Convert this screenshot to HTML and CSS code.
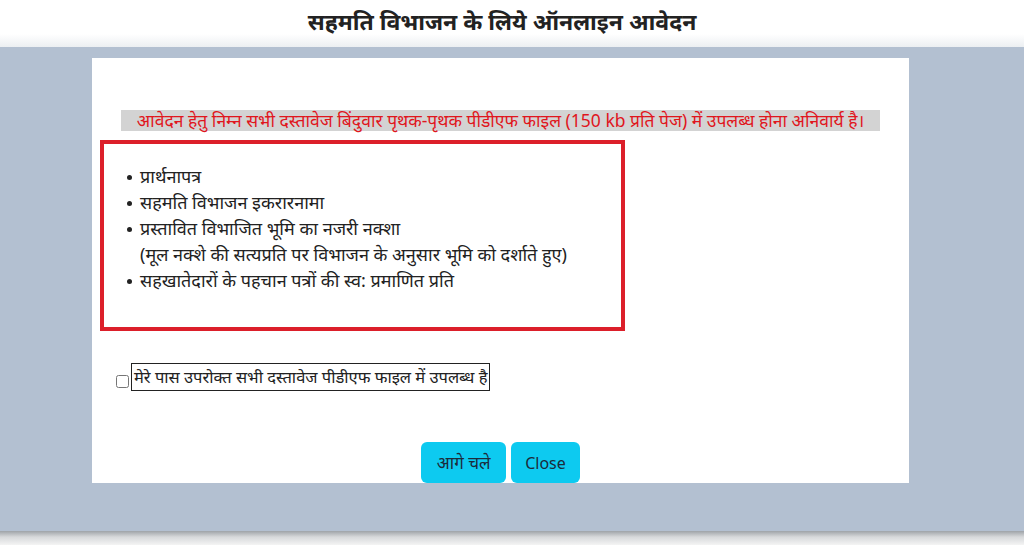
FILE: index.html
```html
<!DOCTYPE html>
<html lang="hi">
<head>
<meta charset="utf-8">
<title>सहमति विभाजन के लिये ऑनलाइन आवेदन</title>
<link rel="stylesheet" href="styles.css">
</head>
<body>
<header class="topbar">
  <h1 class="title">सहमति विभाजन के लिये ऑनलाइन आवेदन</h1>
</header>
<main class="backdrop">
  <section class="card">
    <p class="notice">आवेदन हेतु निम्न सभी दस्तावेज बिंदुवार पृथक-पृथक पीडीएफ फाइल (150 kb प्रति पेज) में उपलब्ध होना अनिवार्य है।</p>
    <div class="docbox">
      <ul class="doclist">
        <li>प्रार्थनापत्र</li>
        <li>सहमति विभाजन इकरारनामा</li>
        <li>प्रस्तावित विभाजित भूमि का नजरी नक्शा<br>(मूल नक्शे की सत्यप्रति पर विभाजन के अनुसार भूमि को दर्शाते हुए)</li>
        <li>सहखातेदारों के पहचान पत्रों की स्व: प्रमाणित प्रति</li>
      </ul>
    </div>
    <div class="confirm">
      <input type="checkbox" id="agree" class="check">
      <label for="agree" class="confirm-label">मेरे पास उपरोक्त सभी दस्तावेज पीडीएफ फाइल में उपलब्ध है</label>
    </div>
    <div class="actions">
      <button class="btn btn-hi" type="button">आगे चले</button>
      <button class="btn" type="button">Close</button>
    </div>
  </section>
</main>
<footer class="bottom"></footer>
</body>
</html>
```
FILE: styles.css
```css
* { box-sizing: border-box; }
html, body { margin: 0; padding: 0; }
body {
  width: 1024px;
  height: 545px;
  overflow: hidden;
  background: #fff;
  font-family: "Noto Sans", "Noto Sans Devanagari", "Lohit Devanagari", "Liberation Sans", sans-serif;
  color: #222;
}
.topbar {
  height: 47px;
  display: flex;
  justify-content: center;
  align-items: center;
  background: linear-gradient(#ffffff 0, #ffffff 34px, #eceff2 47px);
}
.title {
  margin: 0 20px 0 0;
  font-size: 23px;
  font-weight: 700;
  color: #222;
  line-height: 1;
  padding-bottom: 4px;
}
.backdrop {
  background: #b3c0d1;
  height: 484px;
  padding: 11px 115px 0 92px;
}
.card {
  background: #fff;
  width: 817px;
  height: 425px;
  padding: 52px 29px 0 8px;
  display: flex;
  flex-direction: column;
}
.notice {
  margin: 0 0 9px 21px;
  height: 21px;
  background: #d3d3d3;
  color: #e0161d;
  font-size: 17.5px;
  line-height: 21px;
  text-align: center;
  white-space: nowrap;
}
.docbox {
  width: 525px;
  height: 193px;
  border: 4px solid #dc1f2a;
  padding: 19px 0 0 0;
}
.doclist {
  margin: 0;
  padding-left: 36px;
  list-style: none;
  font-size: 18px;
  line-height: 26px;
  color: #222;
}
.doclist li {
  position: relative;
}
.doclist li::before {
  content: "";
  position: absolute;
  left: -13px;
  top: 12px;
  width: 5px;
  height: 5px;
  border-radius: 50%;
  background: #222;
}
.confirm {
  display: flex;
  align-items: center;
  margin: 32px 0 0 16px;
}
.check {
  margin: 8px 2px 0 0;
  width: 13px;
  height: 13px;
}
.confirm-label {
  border: 1px solid #222;
  height: 28px;
  padding: 0 2px;
  font-size: 16.5px;
  line-height: 26px;
  color: #222;
  white-space: nowrap;
}
.actions {
  display: flex;
  justify-content: center;
  gap: 5px;
  margin: 51px -21px 0 0;
}
.btn {
  background: #0dcaf0;
  border: none;
  border-radius: 6px;
  height: 41px;
  padding: 0 14px;
  font-family: "Noto Sans", "Noto Sans Devanagari", "Lohit Devanagari", "Liberation Sans", sans-serif;
  font-size: 16px;
  color: #1c2b3a;
}
.btn-hi {
  font-size: 17px;
  width: 85px;
  padding: 0;
}
.bottom {
  height: 14px;
  background: linear-gradient(#9ea3a8 0, #d7d9db 6px, #f4f4f4 14px);
}
```
